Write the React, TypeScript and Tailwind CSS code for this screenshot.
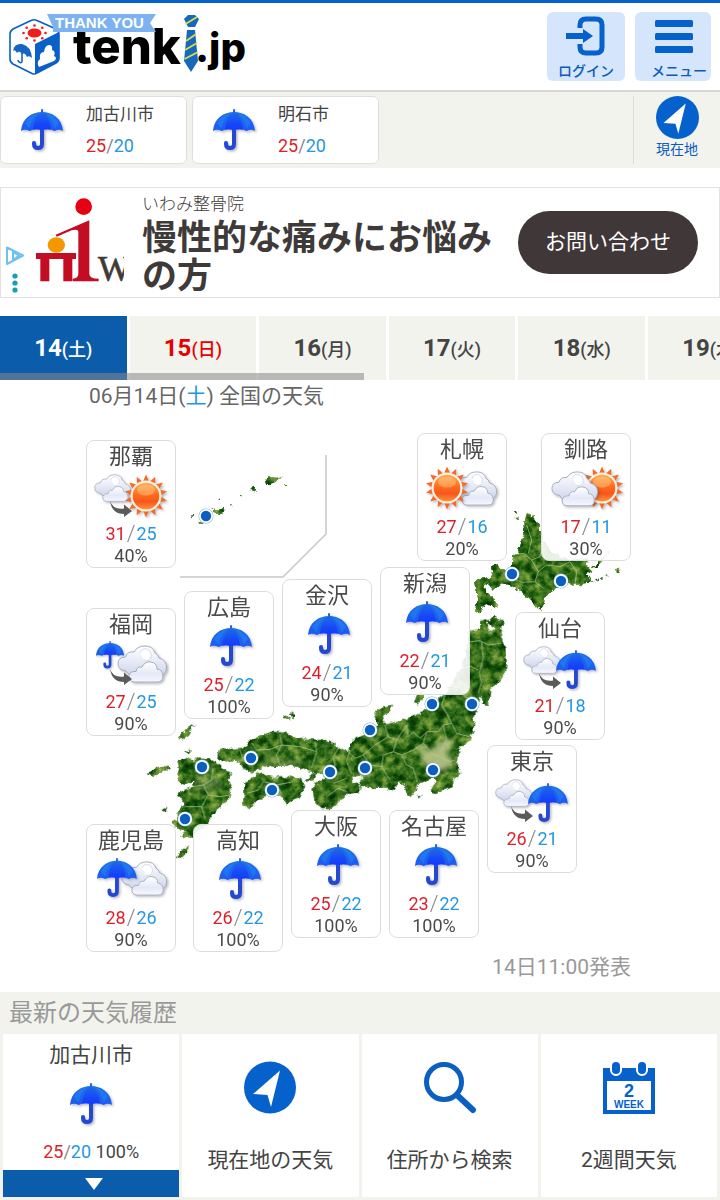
import React, { useState } from "react";

type Weather =
  | "rain"
  | "cloudThenSun"
  | "rainThenCloud"
  | "cloudThenRain"
  | "sunCloud"
  | "cloudSun"
  | "rainCloud";

interface CityForecast {
  name: string;
  weather: Weather;
  high: number;
  low: number;
  rain: number;
  place: string;
}

const CITIES: CityForecast[] = [
  { name: "那覇", weather: "cloudThenSun", high: 31, low: 25, rain: 40, place: "left-0 top-[7px]" },
  { name: "札幌", weather: "sunCloud", high: 27, low: 16, rain: 20, place: "left-[331px] top-0" },
  { name: "釧路", weather: "cloudSun", high: 17, low: 11, rain: 30, place: "left-[455px] top-0" },
  { name: "新潟", weather: "rain", high: 22, low: 21, rain: 90, place: "left-[294px] top-[134px]" },
  { name: "金沢", weather: "rain", high: 24, low: 21, rain: 90, place: "left-[196px] top-[146px]" },
  { name: "広島", weather: "rain", high: 25, low: 22, rain: 100, place: "left-[98px] top-[158px]" },
  { name: "福岡", weather: "rainThenCloud", high: 27, low: 25, rain: 90, place: "left-0 top-[175px]" },
  { name: "仙台", weather: "cloudThenRain", high: 21, low: 18, rain: 90, place: "left-[429px] top-[179px]" },
  { name: "東京", weather: "cloudThenRain", high: 26, low: 21, rain: 90, place: "left-[401px] top-[312px]" },
  { name: "大阪", weather: "rain", high: 25, low: 22, rain: 100, place: "left-[205px] top-[377px]" },
  { name: "名古屋", weather: "rain", high: 23, low: 22, rain: 100, place: "left-[303px] top-[377px]" },
  { name: "鹿児島", weather: "rainCloud", high: 28, low: 26, rain: 90, place: "left-0 top-[391px]" },
  { name: "高知", weather: "rain", high: 26, low: 22, rain: 100, place: "left-[107px] top-[391px]" },
];

const DAYS = [
  { date: 14, day: "土" },
  { date: 15, day: "日" },
  { date: 16, day: "月" },
  { date: 17, day: "火" },
  { date: 18, day: "水" },
  { date: 19, day: "木" },
];

const PINS = [
  [206, 516],
  [512, 574],
  [561, 581],
  [432, 704],
  [472, 704],
  [370, 730],
  [251, 758],
  [202, 767],
  [330, 772],
  [365, 768],
  [433, 770],
  [272, 790],
  [185, 819],
];

// Gradients shared by every weather icon
function IconDefs() {
  return (
    <svg width="0" height="0" className="absolute" aria-hidden="true">
      <defs>
        <linearGradient id="canopy" x1="0" y1="0" x2="0" y2="1">
          <stop offset="0" stopColor="#1e72e6" />
          <stop offset="1" stopColor="#1b58f5" />
        </linearGradient>
        <linearGradient id="canopyMid" x1="0" y1="0" x2="0" y2="1">
          <stop offset="0" stopColor="#206ae6" />
          <stop offset="1" stopColor="#1238ff" />
        </linearGradient>
        <linearGradient id="cloud" x1="0" y1="0" x2="0" y2="1">
          <stop offset="0" stopColor="#ffffff" />
          <stop offset="0.5" stopColor="#e6eaf6" />
          <stop offset="1" stopColor="#ccd4ea" />
        </linearGradient>
        <linearGradient id="cloudFront" x1="0" y1="0" x2="0" y2="1">
          <stop offset="0" stopColor="#ffffff" />
          <stop offset="0.6" stopColor="#e4e9f7" />
          <stop offset="1" stopColor="#f6f8ff" />
        </linearGradient>
        <linearGradient id="sun" x1="0" y1="0" x2="0" y2="1">
          <stop offset="0" stopColor="#ffac52" />
          <stop offset="0.45" stopColor="#ff6d1c" />
          <stop offset="0.7" stopColor="#f8561a" />
          <stop offset="1" stopColor="#ff9038" />
        </linearGradient>
        <filter id="soft" x="-20%" y="-20%" width="150%" height="150%">
          <feDropShadow dx="1.5" dy="1.5" stdDeviation="1.2" floodColor="#334" floodOpacity="0.35" />
        </filter>
      </defs>
    </svg>
  );
}

// 42 x 41
function UmbrellaShape() {
  return (
    <g filter="url(#soft)">
      <path d="M21 20V35q0 4-4 4q-4 0-4-4v-1" fill="none" stroke="#2348d0" strokeWidth="4" strokeLinecap="round" />
      <path d="M20 0.500q1-1 2 0v4h-2z" fill="#2466e0" />
      <path
        d="M0 22C1 9 11 3 21 3s20 6 21 19q-4-2.500-8.500 0q-5-3-12.500-1q-7-2-12.500 1q-4.500-2.500-8.500 0z"
        fill="url(#canopy)"
      />
      <path d="M21 3q-8 5-9 17.600q4.500-1 9 .4q5-1.400 9-.4Q29 8 21 3z" fill="url(#canopyMid)" />
      <path d="M4 14Q8 7 17 4Q11 9 8.500 20" fill="#2d9bf5" opacity="0.3" />
      <path d="M38 14Q34 7 25 4Q31 9 33.500 20" fill="#2d9bf5" opacity="0.3" />
    </g>
  );
}

// 50 x 38
function CloudShape() {
  return (
    <g filter="url(#soft)" stroke="#a4abb9" strokeWidth="1">
      <path
        d="M9 26Q1 25 1 18.500Q1 12 8.500 12Q10 6 17 7Q20 1 28 1Q36 1 38 8Q41 9 42 13Q50 15 49.500 23Q49 30 42 32L14 30Q10 29 9 26z"
        fill="url(#cloud)"
      />
      <path d="M23 8Q24 3 30 4Q35 6 34 12Q32 17 27 15" fill="#fff" stroke="#d5dae6" />
      <path
        d="M17 37Q11 36 12 30.500Q13 26 19 26.500Q20 21 25 22Q28 16 34 17Q40 18 40 24Q46 25 46 31Q46 37 40 37z"
        fill="url(#cloudFront)"
      />
    </g>
  );
}

// Centred on 0,0
function SunShape() {
  const rays = Array.from({ length: 14 }, (_, i) => (i * 360) / 14);
  return (
    <g filter="url(#soft)">
      {rays.map((r) => (
        <path key={r} d="M-3-14.500L0-21.500L3-14.500z" transform={`rotate(${r})`} fill="#f2692b" />
      ))}
      <circle r="15.500" fill="#fff2e2" />
      <circle r="13.300" fill="url(#sun)" />
      <ellipse cy="-6" rx="9" ry="5.500" fill="#ffd9a0" opacity="0.4" />
    </g>
  );
}

function ChangeArrow() {
  return <path d="M23 28Q26 37 37 35.500v-4l8 6.500l-8 6v-3Q25 41 23 28z" fill="#5b5b5b" />;
}

function WeatherIcon({ weather }: { weather: Weather }) {
  return (
    <svg viewBox="0 0 88 50" className="block h-[50px] w-[88px] overflow-visible" aria-hidden="true">
      {weather === "rain" && (
        <g transform="translate(25 1)">
          <UmbrellaShape />
        </g>
      )}
      {weather === "cloudThenSun" && (
        <>
          <g transform="translate(7 1) scale(0.740)">
            <CloudShape />
          </g>
          <g transform="translate(59 23)">
            <SunShape />
          </g>
          <ChangeArrow />
        </>
      )}
      {weather === "rainThenCloud" && (
        <>
          <g transform="translate(9 0) scale(0.670)">
            <UmbrellaShape />
          </g>
          <g transform="translate(30 4)">
            <CloudShape />
          </g>
          <ChangeArrow />
        </>
      )}
      {weather === "cloudThenRain" && (
        <>
          <g transform="translate(7 1) scale(0.740)">
            <CloudShape />
          </g>
          <g transform="translate(40 5) scale(0.950)">
            <UmbrellaShape />
          </g>
          <ChangeArrow />
        </>
      )}
      {weather === "sunCloud" && (
        <>
          <g transform="translate(33 5) scale(0.920)">
            <CloudShape />
          </g>
          <g transform="translate(29 22)">
            <SunShape />
          </g>
        </>
      )}
      {weather === "cloudSun" && (
        <>
          <g transform="translate(60 22)">
            <SunShape />
          </g>
          <g transform="translate(9 5) scale(0.940)">
            <CloudShape />
          </g>
        </>
      )}
      {weather === "rainCloud" && (
        <>
          <g transform="translate(34 4) scale(0.920)">
            <CloudShape />
          </g>
          <g transform="translate(10 1) scale(0.950)">
            <UmbrellaShape />
          </g>
        </>
      )}
    </svg>
  );
}

function Umbrella() {
  return (
    <svg viewBox="0 0 42 42" className="block h-[42px] w-[42px] overflow-visible" aria-hidden="true">
      <UmbrellaShape />
    </svg>
  );
}

function LocationIcon({ className }: { className: string }) {
  return (
    <svg viewBox="0 0 52 52" className={className} aria-hidden="true">
      <circle cx="26" cy="26" r="26" fill="#0561cb" />
      <path d="M36 9L9 32.500L23.500 33.500L27 45.500z" fill="#fff" />
    </svg>
  );
}

function Logo() {
  const dots = Array.from({ length: 8 }, (_, i) => (i * Math.PI) / 4);
  return (
    <svg viewBox="0 0 250 76" className="block h-[76px] w-[250px]" role="img" aria-label="tenki.jp">
      {/* Cube */}
      <path d="M13 26L31 17.500Q34 16 37 17.500L56 26Q59 28 59 31V55Q59 58 56 60L37 70Q34 72 31 70L13 61Q10 59 10 56V31Q10 28 13 26z" fill="#fff" stroke="#0b5fc0" strokeWidth="1.600" />
      <path d="M35 41L59 29V55Q59 58 56 60L35 71z" fill="#0b5fc9" />
      <path d="M39 64Q36 59 40 56Q39 49 44 49Q45 42 49 42Q53 42 52 47Q56 48 54 53Q58 55 54 58z" fill="#fff" />
      <ellipse cx="34.500" cy="30" rx="7" ry="4.500" fill="#ef1c1c" />
      {dots.map((a) => (
        <circle key={a} cx={34.5 + 11 * Math.cos(a)} cy={30 + 7.5 * Math.sin(a)} r="1.300" fill="#ef1c1c" />
      ))}
      <path d="M13 48Q14 40 22 41Q31 43 32 55Q29 52 27 54Q25 49 22 51Q19 47 17 50Q15 46 13 48z" fill="#1565c4" />
      <path d="M22 49V58Q22 60 20 59.500Q18 59 18 57" fill="none" stroke="#1565c4" strokeWidth="1.600" />

      <text x="73" y="61" fontFamily="Inter, sans-serif" fontWeight="800" fontSize="49" fill="#000">tenk</text>
      <text x="195" y="59" fontFamily="Inter, sans-serif" fontWeight="800" fontSize="40" fill="#000">.jp</text>

      {/* Ribbon */}
      <path d="M47 11H156L150 20L156 29H53V24L47 11z" fill="#7cb2ef" />
      <text x="55" y="25" fontFamily="Liberation Sans, sans-serif" fontWeight="700" fontSize="15" fill="#fff">THANK YOU</text>

      {/* Tie */}
      <path d="M184 16L188 12H195L199 16L195 24H188z" fill="#1768bd" />
      <path d="M187 27H195L198 58L191 69L184 58z" fill="#1768bd" />
      <path d="M185.500 21L197 14M186 38L195.500 31.500M185 47L197 40M184.500 56L198 49" stroke="#d6e04a" strokeWidth="1.800" />
    </svg>
  );
}

function Temps({ high, low }: { high: number; low: number }) {
  return (
    <>
      <span className="text-[#dd1f2b]">{high}</span>
      <span className="text-[#888]">/</span>
      <span className="text-[#2497e3]">{low}</span>
    </>
  );
}

function CityLink({ name }: { name: string }) {
  return (
    <a href="#city" className="flex h-[68px] w-[187px] items-center rounded-md border border-[#dededb] bg-white pl-5">
      <Umbrella />
      <span className="ml-[23px] flex flex-col text-[#444]">
        <span className="text-[17px] leading-[31px]">{name}</span>
        <span className="text-[18px] leading-[31px]">
          <Temps high={25} low={20} />
        </span>
      </span>
    </a>
  );
}

function JapanMap() {
  return (
    <svg viewBox="86 433 548 518" className="block h-[518px] w-full overflow-visible" aria-hidden="true">
      <defs>
        {/* Rough coast line with mottled greens */}
        <filter id="terrain" x="-5%" y="-5%" width="110%" height="110%" colorInterpolationFilters="sRGB">
          <feTurbulence type="fractalNoise" baseFrequency="0.180" numOctaves="3" seed="4" result="edge" />
          <feDisplacementMap in="SourceGraphic" in2="edge" scale="6" xChannelSelector="R" yChannelSelector="G" result="land" />
          <feTurbulence type="fractalNoise" baseFrequency="0.110" numOctaves="5" seed="11" result="noise" />
          <feColorMatrix
            in="noise"
            type="matrix"
            values="1.500 0 0 0 -0.530  1.100 0 0 0 -0.120  0.700 0 0 0 -0.240  0 0 0 0 0.700"
            result="mottle"
          />
          <feComposite in="mottle" in2="land" operator="in" result="texture" />
          <feMerge>
            <feMergeNode in="land" />
            <feMergeNode in="texture" />
          </feMerge>
        </filter>
        <filter id="haze">
          <feGaussianBlur stdDeviation="8" />
        </filter>
      </defs>

      <path d="M326 455V534L283 577H180" fill="none" stroke="#c8c8c8" strokeWidth="1.500" />

      <g filter="url(#terrain)">
        {/* Hokkaido */}
        <g transform="translate(370 425) scale(0.333333)" fill="#33701a">
          <path d="M470 262L485 265L490 280L505 300L515 320L518 345L540 375L570 395L610 408L655 398L650 420L668 438L650 448L665 472L620 480L580 475L545 495L525 520L515 558L490 535L455 500L420 480L395 475L372 495L355 475L340 480L350 500L370 520L385 545L375 552L345 535L330 565L312 560L315 540L325 525L320 500L315 470L330 455L350 462L370 450L362 425L375 418L390 430L410 440L425 420L430 390L445 385L455 350L465 320L463 290z" />
          <path d="M665 428L690 405L725 380L700 405L675 430zM732 438L750 430L745 440zM700 458L718 450M432 262L440 260L440 270zM436 278L446 278L443 285z" />
          <path d="M665 470L720 450" stroke="#9aa88e" strokeWidth="4" strokeDasharray="8 7" />
        </g>

        <g transform="translate(130 690) scale(0.333333)" fill="#2f6b17" stroke="#2f6b17" strokeWidth="4">
          {/* Honshu */}
          <path d="M1018-175L1050-180L1050-205L1070-210L1072-170L1095-175L1100-185L1075-205L1092-224L1105-210L1118-208L1112-175L1115-145L1125-120L1128-80L1120-45L1105-25L1078-5L1075 45L1065 45L1055 20L1045 25L1038 50L1030 90L1028 120L1020 150L995 165L982 185L978 215L988 250L970 265L965 290L935 300L910 308L908 290L920 275L915 258L895 265L880 275L860 275L855 300L840 318L828 300L828 285L820 275L800 275L792 300L760 290L720 292L695 285L690 275L700 260L690 250L670 255L665 275L690 290L685 305L650 310L630 330L600 355L575 355L555 330L550 300L555 280L575 275L590 262L580 250L560 245L530 240L500 228L470 222L440 228L410 225L385 235L365 245L345 235L330 212L300 208L280 215L265 195L270 175L300 180L335 175L360 155L395 140L420 128L465 130L500 145L560 152L600 155L625 175L650 185L665 175L670 150L700 135L730 130L745 100L735 80L745 58L785 50L775 65L760 70L755 90L765 105L790 100L830 90L860 75L890 60L920 35L950 10L970-20L990-60L1010-100z" />
          {/* Kyushu */}
          <path d="M165 205L190 215L215 205L240 210L265 225L280 240L300 250L290 270L300 290L300 320L270 345L245 375L225 405L200 420L185 440L155 438L170 420L150 415L130 408L130 395L148 395L145 370L165 345L155 320L145 310L165 300L185 295L195 285L190 270L160 285L145 255L150 235L145 215z" />
          {/* Shikoku */}
          <path d="M345 280L375 265L385 250L410 260L440 265L490 262L515 270L520 295L505 320L480 330L470 340L455 312L430 310L400 320L370 340L360 355L340 345L345 310z" />
          <path d="M532 272L545 258L560 250L550 268zM150 145L165 120L188 107L175 132L158 145zM60 248L80 238L115 230L95 245L70 255zM145 500L160 480L173 472L165 490L150 504zM855 38L862 15L870 12L875 5L878 20L865 40zM480 74L490 68L496 76L488 82zM462 84L470 79L474 86zM170 185L178 182L178 190zM100 360L108 355L106 362zM866 315L872 318L868 322z" />
        </g>

        {/* Okinawa */}
        <g transform="translate(80 430) scale(0.333333)" fill="#35701f">
          <path d="M395 232L405 240L435 234L436 245L415 252L398 250zM552 160L565 142L590 143L605 138L590 155L560 165zM515 172L525 168L524 188L516 184zM475 198L482 199L480 204zM612 162L622 164L616 168zM450 222L456 224L452 227zM415 208L420 206L420 211zM330 256L340 256L336 262zM355 275L365 280L358 282z" />
        </g>
      </g>

      {/* Plains and prefecture borders */}
      <g transform="translate(130 690) scale(0.333333)">
        <g filter="url(#haze)" fill="#b9c487">
          <path d="M860 165L900 180L945 145L970 150L950 190L975 220L945 240L905 245L880 215z" opacity="0.900" />
          <path d="M690 225L715 235L712 265L690 268z" opacity="0.700" />
          <path d="M1045 5L1058 15L1050 22z" />
          <path d="M180 270L260 260L285 290L220 305z" opacity="0.350" />
          <path d="M400 208L520 212L520 222L400 220z" opacity="0.500" />
        </g>
        <g fill="none" stroke="#b5cc98" strokeWidth="3" strokeLinejoin="round" opacity="0.750">
          <path d="M1022-145L1050-148L1075-135L1112-140M1055-145L1060-95L1048-50L1055-25L1045 10M995-65L1020-72L1045-60M985-25L1000 15L1020 30M945 15L935 45L950 70L965 100L940 105L925 125L890 125L870 145L850 125L835 140L830 105M890 125L880 160L905 190L960 215L975 210M965 100L980 130L1018 140M940 105L950 150L930 190" />
          <path d="M765 105L775 140L800 150L790 185L760 195L755 230L780 270M790 185L815 195L830 225L850 235L862 275M800 150L830 105M755 230L720 225L700 195L675 205L655 185M815 195L850 180L880 160M700 195L735 165L775 140" />
          <path d="M660 180L650 215L665 250M625 175L610 200L615 225L590 262M555 153L560 185L545 235M450 133L455 165L440 195L450 225M365 158L380 180L420 178L455 165L510 170L560 185M330 180L340 210M610 280L650 265M590 320L625 295L650 305" />
          <path d="M230 212L225 240L195 245M250 235L245 270L220 285L235 315L270 320L300 315M220 285L190 290M235 315L215 350L165 350M215 350L225 385M350 310L385 300L400 275L440 285L490 275M440 285L455 312" />
        </g>
      </g>
      <g transform="translate(370 425) scale(0.333333)" fill="none" stroke="#a9c48a" strokeWidth="3" opacity="0.700">
        <path d="M430 390L460 385L485 405L505 440L495 470L455 472L430 460M485 405L510 395L520 350M505 440L530 420L570 425L600 410M495 470L520 490M600 410L620 440L615 478M470 300L485 345L475 385" />
      </g>

      {PINS.map(([x, y]) => (
        <g key={`${x}-${y}`}>
          <circle cx={x} cy={y} r="7.500" fill="#7da7d2" />
          <circle cx={x} cy={y} r="7" fill="#fff" />
          <circle cx={x} cy={y} r="5.200" fill="#0a5fc0" />
        </g>
      ))}
    </svg>
  );
}

function CityCard({ city }: { city: CityForecast }) {
  return (
    <a
      href="#forecast"
      className={`absolute flex w-[90px] flex-col items-center rounded-lg border border-[#dcdcdc] bg-white/90 text-[#4a4a4a] ${city.place}`}
    >
      <span className="text-[22px] leading-[32px]">{city.name}</span>
      <WeatherIcon weather={city.weather} />
      <span className="flex items-center text-[18px] leading-[22px]">
        <span className="text-[#dd1f2b]">{city.high}</span>
        <span className="px-px text-[22px] font-light text-[#888]">/</span>
        <span className="text-[#2497e3]">{city.low}</span>
      </span>
      <span className="text-[18px] leading-[22px]">{city.rain}%</span>
    </a>
  );
}

export default function App() {
  const [selected, setSelected] = useState(14);

  return (
    <div className="w-full overflow-hidden bg-white font-[Roboto,'Noto_Sans_CJK_JP',sans-serif] text-[#444]">
      <IconDefs />

      {/* Header */}
      <header className="flex items-start justify-between border-t-[3px] border-b-2 border-t-[#0561cb] border-b-[#d5d5d3] pr-[9px]">
        <a href="#top">
          <Logo />
        </a>
        <div className="flex gap-[10px] pt-[9px] pb-[9px]">
          <button type="button" className="flex h-[69px] w-[78px] flex-col items-center rounded-md bg-[#d5e5fb] pt-1 text-[14px] leading-[20px] font-medium text-[#0b5cb8]">
            <svg viewBox="0 0 40 40" className="mb-[5px] h-10 w-10" aria-hidden="true">
              <path d="M14 12V9q0-6 6-6h10q6 0 6 6v22q0 6-6 6H20q-6 0-6-6v-3" fill="none" stroke="#0561cb" strokeWidth="5" />
              <path d="M0 17H17V13L27 20L17 27V23H0z" fill="#0561cb" />
            </svg>
            ログイン
          </button>
          <button type="button" className="flex h-[69px] w-[76px] flex-col items-end rounded-md bg-[#d5e5fb] pt-2 pr-1 text-[14px] leading-[20px] font-medium text-[#0b5cb8]">
            <svg viewBox="0 0 38 36" className="mr-[14px] mb-[5px] h-9 w-[38px]" fill="#0561cb" aria-hidden="true">
              <rect width="38" height="7" rx="1.500" />
              <rect y="13" width="38" height="7" rx="1.500" />
              <rect y="26" width="38" height="7" rx="1.500" />
            </svg>
            メニュー
          </button>
        </div>
      </header>

      {/* Saved places */}
      <nav className="flex items-center justify-between bg-[#f2f3ed] py-1">
        <div className="flex gap-[5px]">
          <CityLink name="加古川市" />
          <CityLink name="明石市" />
        </div>
        <a href="#here" className="flex h-[68px] w-[87px] flex-col items-center border-l border-[#dcdcd8] text-[14px] leading-[20px] text-[#0b5cb8]">
          <LocationIcon className="h-[43px] w-[43px]" />
          現在地
        </a>
      </nav>

      {/* Ad */}
      <aside className="mt-[19px] flex h-[111px] border border-[#e2e2e2]">
        <div className="flex w-[34px] flex-col items-center pt-[57px] pr-[6px]">
          <svg viewBox="0 0 20 50" className="h-[50px] w-5" aria-hidden="true">
            <path d="M2 2.500V19L18 10.500z" fill="none" stroke="#6fc0ee" strokeWidth="2" strokeLinejoin="round" />
            <path d="M8 6V15L14 10.500L7 6.500" fill="none" stroke="#6fc0ee" strokeWidth="2" />
            <circle cx="10" cy="31" r="2.600" fill="#1a9db0" />
            <circle cx="10" cy="38" r="2.600" fill="#1a9db0" />
            <circle cx="10" cy="45" r="2.600" fill="#1a9db0" />
          </svg>
        </div>
        <svg viewBox="105 50 267 258" className="mt-[9px] h-[86px] w-[89px]" aria-hidden="true">
          <circle cx="251" cy="79" r="25" fill="#e60012" />
          <path d="M108 218H228V236H217V303H190V236H148V303H121V236H108z" fill="#c30d23" />
          <path d="M167 163L268 120V280Q268 295 296 295V303H218V295Q235 293 235 280V155Q235 145 215 150L170 169z" fill="#c30d23" />
          <ellipse cx="169" cy="194" rx="26" ry="23" fill="#f39800" />
          <text x="294" y="301" fontFamily="Liberation Serif, serif" fontSize="106" fill="#3e3a39" stroke="#3e3a39" strokeWidth="2">W</text>
        </svg>
        <div className="ml-[18px] flex-1 pt-[3px] text-[#3f3a3a]">
          <p className="text-[17px] leading-[26px] font-light">いわみ整骨院</p>
          <p className="mt-[3px] text-[35px] leading-[38px] font-bold">
            慢性的な痛みにお悩み
            <br />
            の方
          </p>
        </div>
        <button type="button" className="mt-[23px] mr-[21px] h-[63px] w-[180px] shrink-0 rounded-full bg-[#403838] text-[21px] text-white">
          お問い合わせ
        </button>
      </aside>

      {/* Day tabs */}
      <div className="relative mt-[18px] flex overflow-hidden">
        {DAYS.map(({ date, day }) => {
          const active = date === selected;
          const color = active ? "bg-[#0b5caa] text-white" : day === "日" ? "bg-[#f2f3ed] text-[#e60000]" : "bg-[#f2f3ed] text-[#444]";
          return (
            <div key={date} className="h-16 shrink-0 basis-[18%] pr-[3px]">
              <button type="button" onClick={() => setSelected(date)} className={`h-full w-full text-[18px] font-medium whitespace-nowrap ${color}`}>
                <span className="text-[24px] font-bold">{date}</span>({day})
              </button>
            </div>
          );
        })}
        <div className="absolute bottom-0 left-0 h-[7px] w-[364px] bg-[#888]/55" />
      </div>

      {/* Map */}
      <main className="mx-auto w-[548px]">
        <h1 className="pl-[3px] text-[21px] leading-[32px] text-[#666]">
          06月14日(<span className="text-[#2497e3]">土</span>) 全国の天気
        </h1>
        <div className="relative mt-[21px]">
          <JapanMap />
          {CITIES.map((city) => (
            <CityCard key={city.name} city={city} />
          ))}
        </div>
        <p className="pr-[3px] text-right text-[21px] leading-[32px] text-[#999]">14日11:00発表</p>
      </main>

      {/* History */}
      <section className="mt-[9px] bg-[#f2f3ed] px-[3px] pb-[3px]">
        <h2 className="pl-[6px] text-[24px] leading-[42px] text-[#999]">最新の天気履歴</h2>
        <div className="grid grid-cols-4 gap-[3px]">
          <a href="#city" className="flex h-[163px] flex-col items-center bg-white pt-[7px]">
            <span className="text-[21px] leading-[28px]">加古川市</span>
            <span className="mt-[14px]">
              <Umbrella />
            </span>
            <span className="mt-[13px] text-[18px] leading-[28px]">
              <Temps high={25} low={20} /> 100%
            </span>
            <span className="mt-auto flex h-[27px] w-full items-center justify-center bg-[#0b5caa]">
              <svg viewBox="0 0 18 12" className="ml-[6px] h-3 w-[18px]" aria-hidden="true">
                <path d="M0 0H18L9 12z" fill="#fff" />
              </svg>
            </span>
          </a>
          <a href="#here" className="flex flex-col items-center bg-white pt-[27px]">
            <LocationIcon className="h-[53px] w-[52px]" />
            <span className="mt-8 text-[21px] leading-[28px]">現在地の天気</span>
          </a>
          <a href="#search" className="flex flex-col items-center bg-white pt-[27px]">
            <svg viewBox="0 0 52 53" className="h-[53px] w-[52px]" fill="none" stroke="#0a5fc0" aria-hidden="true">
              <circle cx="20" cy="21" r="17.500" strokeWidth="5" />
              <path d="M33 34L49 49" strokeWidth="6" strokeLinecap="round" />
            </svg>
            <span className="mt-8 text-[21px] leading-[28px]">住所から検索</span>
          </a>
          <a href="#weeks" className="flex flex-col items-center bg-white pt-[27px]">
            <svg viewBox="0 0 52 53" className="h-[53px] w-[52px]" aria-hidden="true">
              <path d="M0 7H52V53H0z" fill="#0561cb" />
              <path d="M4 20H48V49H4z" fill="#fff" />
              <rect x="8" y="0" width="10" height="14" rx="5" fill="#0561cb" stroke="#fff" strokeWidth="2" />
              <rect x="34" y="0" width="10" height="14" rx="5" fill="#0561cb" stroke="#fff" strokeWidth="2" />
              <text x="26" y="36" textAnchor="middle" fontFamily="Liberation Sans, sans-serif" fontWeight="700" fontSize="18" fill="#0561cb">2</text>
              <text x="26" y="47" textAnchor="middle" fontFamily="Liberation Sans, sans-serif" fontWeight="700" fontSize="10" fill="#0561cb">WEEK</text>
            </svg>
            <span className="mt-8 text-[21px] leading-[28px]">2週間天気</span>
          </a>
        </div>
      </section>
    </div>
  );
}
